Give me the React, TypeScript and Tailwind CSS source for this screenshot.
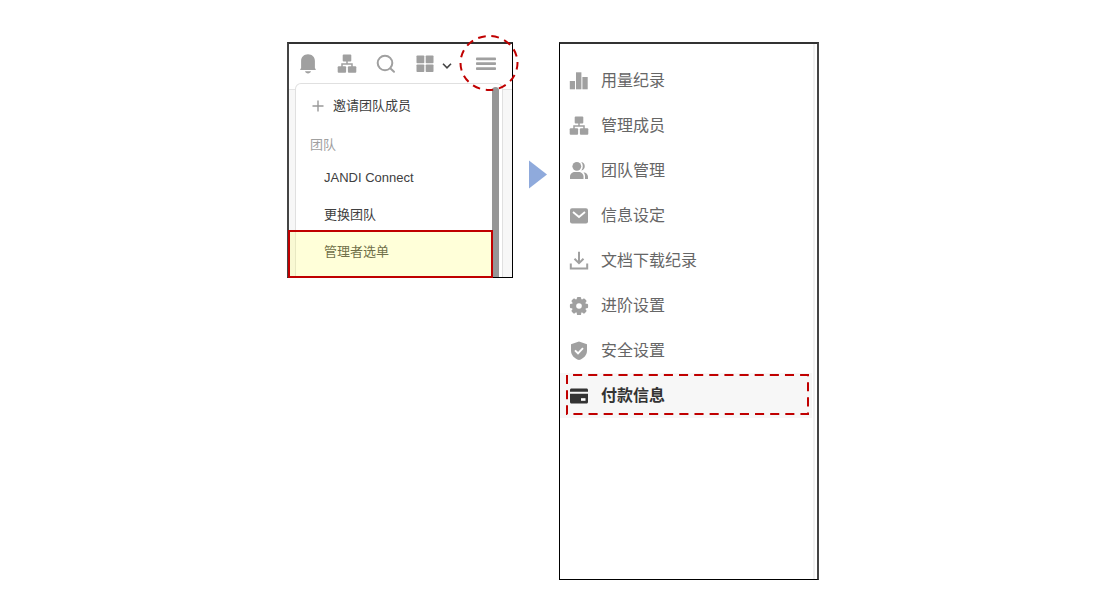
import React from "react";

const BellIcon = () => (
  <svg width="16" height="20" viewBox="0 0 16 20" fill="currentColor" aria-hidden="true">
    <path d="M8 0.3C12 0.3 14.9 3.1 14.9 7V14l.8 1.2c.2.4.1.8-.4.8H.7c-.5 0-.6-.4-.4-.8L1.1 14V7C1.1 3.1 4 .3 8 .3ZM5 17.2h6c-.4 1.3-1.500 2.200-3 2.200s-2.600-.9-3-2.200Z" />
  </svg>
);

const OrgIcon = () => (
  <svg width="20" height="20" viewBox="0 0 20 20" aria-hidden="true">
    <g fill="currentColor">
      <rect x="5.700" y="0.600" width="8.600" height="6.800" rx="1" />
      <rect x="0.700" y="12.300" width="8.400" height="6.500" rx="1" />
      <rect x="10.900" y="12.300" width="8.400" height="6.500" rx="1" />
    </g>
    <path d="M10 7v3M5 13v-3h10v3" fill="none" stroke="currentColor" strokeWidth="1.500" />
  </svg>
);

const SearchIcon = () => (
  <svg width="20" height="20" viewBox="0 0 20 20" fill="none" stroke="currentColor" strokeWidth="2" strokeLinecap="round" aria-hidden="true">
    <circle cx="9" cy="9" r="7.300" />
    <path d="m14.500 14.500 3.500 3.300" />
  </svg>
);

const GridIcon = () => (
  <svg width="18" height="18" viewBox="0 0 18 18" fill="currentColor" aria-hidden="true">
    <rect x="0.500" y="0.500" width="7.800" height="7.800" rx="0.800" />
    <rect x="9.700" y="0.500" width="7.800" height="7.800" rx="0.800" />
    <rect x="0.500" y="9.500" width="7.800" height="7.500" rx="0.800" />
    <rect x="9.700" y="9.500" width="7.800" height="7.500" rx="0.800" />
  </svg>
);

const ChevronIcon = () => (
  <svg width="10" height="6" viewBox="0 0 10 6" fill="none" stroke="currentColor" strokeWidth="1.600" aria-hidden="true">
    <path d="m1 .8 4 4 4-4" />
  </svg>
);

const MenuIcon = () => (
  <svg width="20" height="14" viewBox="0 0 20 14" fill="currentColor" aria-hidden="true">
    <rect y="0.500" width="20" height="2.800" rx="0.800" />
    <rect y="5.300" width="20" height="2.800" rx="0.800" />
    <rect y="10.200" width="20" height="2.800" rx="0.800" />
  </svg>
);

const PlusIcon = () => (
  <svg width="12" height="12" viewBox="0 0 12 12" stroke="currentColor" strokeWidth="1.400" aria-hidden="true">
    <path d="M6 .5v11M.5 6h11" />
  </svg>
);

const ChartIcon = () => (
  <svg width="20" height="20" viewBox="0 0 20 20" fill="currentColor" aria-hidden="true">
    <rect x="0.800" y="10" width="5.200" height="8.300" />
    <rect x="7" y="1.300" width="5.400" height="17" />
    <rect x="13.400" y="6" width="5.300" height="12.300" />
  </svg>
);

const PeopleIcon = () => (
  <svg width="20" height="20" viewBox="0 0 20 20" fill="currentColor" aria-hidden="true">
    <circle cx="7.800" cy="5.300" r="4.400" />
    <path d="M1 18v-2.500C1 12.800 3.300 11 6 11h3.500c2.700 0 5 1.800 5 4.500V18Z" />
    <path d="M12.300 1a4.400 4.400 0 0 1 0 8.600c2-2.400 2-6.200 0-8.600ZM14.500 11.300c2.700.4 4.500 2.300 4.500 4.500V18h-3v-2.500c0-1.700-.5-3-1.500-4.200Z" />
  </svg>
);

const MailIcon = () => (
  <svg width="20" height="20" viewBox="0 0 20 20" aria-hidden="true">
    <rect x="1" y="2.300" width="18" height="15.200" rx="2" fill="currentColor" />
    <path d="m4 6 6 5 6-5" fill="none" stroke="#fff" strokeWidth="1.800" />
  </svg>
);

const DownloadIcon = () => (
  <svg width="20" height="20" viewBox="0 0 20 20" fill="none" stroke="currentColor" strokeWidth="2" aria-hidden="true">
    <path d="M10 .8V12M5.500 7.700l4.500 4.500 4.500-4.500M1.800 12.500v5h16.400v-5" />
  </svg>
);

const GearIcon = () => (
  <svg width="20" height="20" viewBox="0 0 20 20" aria-hidden="true">
    <g fill="currentColor">
      <circle cx="10" cy="10" r="7.200" />
      {[0, 45, 90, 135].map((angle) => (
        <rect key={angle} x="7.800" y="0.900" width="4.400" height="18.200" rx="1.200" transform={`rotate(${angle} 10 10)`} />
      ))}
    </g>
    <circle cx="10" cy="10" r="2.800" fill="#fff" />
  </svg>
);

const ShieldIcon = () => (
  <svg width="20" height="20" viewBox="0 0 20 20" aria-hidden="true">
    <path d="M10 .6 18 3.300V9.500c0 4.500-3.200 8-8 9.600-4.800-1.600-8-5.100-8-9.600V3.300Z" fill="currentColor" />
    <path d="m6 9.400 3 2.900 5-5.200" fill="none" stroke="#fff" strokeWidth="1.900" />
  </svg>
);

const CardIcon = () => (
  <svg width="20" height="20" viewBox="0 0 20 20" aria-hidden="true">
    <path d="M2.500 2.500h15c.9 0 1.500.6 1.500 1.500v1.800H1V4c0-.9.600-1.500 1.500-1.500ZM1 7.700h18V16c0 .9-.6 1.500-1.500 1.500h-15C1.600 17.500 1 16.900 1 16Z" fill="currentColor" />
    <rect x="12" y="12.200" width="4.500" height="2.600" fill="#fff" />
  </svg>
);

const adminItems = [
  { label: "用量纪录", icon: <ChartIcon /> },
  { label: "管理成员", icon: <OrgIcon /> },
  { label: "团队管理", icon: <PeopleIcon /> },
  { label: "信息设定", icon: <MailIcon /> },
  { label: "文档下载纪录", icon: <DownloadIcon /> },
  { label: "进阶设置", icon: <GearIcon /> },
  { label: "安全设置", icon: <ShieldIcon /> },
  { label: "付款信息", icon: <CardIcon />, active: true },
];

function TeamMenu() {
  return (
    <section className="relative flex h-[236px] w-[226px] flex-col border border-t-2 border-l-2 border-black border-t-[#333] border-l-[#444] bg-[#f7f7f7]">
      <header className="flex h-[46px] shrink-0 items-center border-b border-[#e4e4e4] bg-white pb-[6px] pl-[11px] text-[#a0a0a0]">
        <button aria-label="通知" className="mr-[21px]"><BellIcon /></button>
        <button aria-label="组织" className="mr-[19px]"><OrgIcon /></button>
        <button aria-label="搜索" className="mr-5"><SearchIcon /></button>
        <button aria-label="应用" className="flex items-center gap-2">
          <GridIcon />
          <span className="pt-1 text-[#444]"><ChevronIcon /></span>
        </button>
        <button aria-label="菜单" className="ml-6"><MenuIcon /></button>
      </header>
      <div className="mr-[9px] -mt-[7px] ml-[6px] flex min-h-0 flex-1 overflow-hidden rounded-t-md border border-b-0 border-[#e0e0e0] bg-white">
        <nav className="flex flex-1 flex-col items-start text-[13px] leading-5 text-[#404040]">
          <button className="mt-3 ml-4 flex items-center gap-[9px]">
            <span className="text-[#999]"><PlusIcon /></span>
            邀请团队成员
          </button>
          <h2 className="mt-[19px] ml-[14px] text-[#a0a0a0]">团队</h2>
          <button className="mt-[13px] ml-7">JANDI Connect</button>
          <button className="mt-[17px] ml-7">更换团队</button>
          <button className="mt-[17px] ml-7">管理者选单</button>
        </nav>
        <div className="mt-[3px] mr-[3px] w-[7px] rounded-t-sm bg-[#969696]" />
      </div>
      <div className="pointer-events-none absolute -bottom-px -left-px h-12 w-[205px] border-2 border-[#c00000] bg-[#ffff66]/25" />
      <svg className="pointer-events-none absolute -top-[10px] -right-[7px]" width="60" height="58" viewBox="0 0 60 58" fill="none" aria-hidden="true">
        <path d="M1.500 29a28.500 27 0 0 1 57 0a28.500 27 0 0 1-57 0" pathLength="182" stroke="#c00000" strokeWidth="2" strokeDasharray="8 6" strokeDashoffset="-6" />
      </svg>
    </section>
  );
}

function AdminMenu() {
  return (
    <section className="h-[538px] w-[260px] border border-t-2 border-r-2 border-black border-t-[#333] border-r-[#444] bg-white">
      <nav className="mr-[2px] h-full border-r-2 border-[#f0f0f0] pt-[14px] pr-px">
        {adminItems.map(({ label, icon, active }) => (
          <div key={label} className="relative">
            <a
              href="#"
              className={
                active
                  ? "flex h-[45px] items-center gap-3 bg-[#f7f7f7] pl-[9px] text-base font-bold text-[#333]"
                  : "flex h-[45px] items-center gap-3 pl-[9px] text-base text-[#666]"
              }
            >
              <span className={active ? "text-[#333]" : "text-[#a0a0a0]"}>{icon}</span>
              {label}
            </a>
            {active && (
              <svg className="pointer-events-none absolute top-px left-[6px]" width="243" height="41" viewBox="0 0 243 41" fill="none" aria-hidden="true">
                <path d="M1 1H242V40H1Z" pathLength="555" stroke="#c00000" strokeWidth="2" strokeDasharray="9 6" strokeDashoffset="-6" />
              </svg>
            )}
          </div>
        ))}
      </nav>
    </section>
  );
}

export default function App() {
  return (
    <main className="flex min-h-screen items-start justify-center bg-white pt-[42px] pl-[7px] font-['Liberation_Sans','Noto_Sans_CJK_SC',sans-serif]">
      <TeamMenu />
      <svg className="mt-[118px] mr-3 ml-4 shrink-0" width="18" height="29" viewBox="0 0 18 29" aria-hidden="true">
        <path d="M0 .5 18 14.500 0 28.500Z" fill="#8faadc" />
      </svg>
      <AdminMenu />
    </main>
  );
}
